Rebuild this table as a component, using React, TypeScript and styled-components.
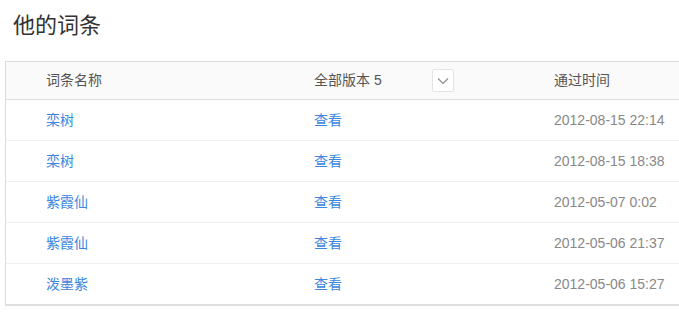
import { createGlobalStyle, styled } from 'styled-components';

const GlobalStyle = createGlobalStyle`
  body {
    margin: 0;
    background: #fff;
    overflow: hidden;
    font-family: "Liberation Sans", "Noto Sans CJK SC", sans-serif;
  }
`;

const Page = styled.div`
  width: 679px;
  overflow: hidden;
`;

const Title = styled.h1`
  margin: 0 0 20px 0;
  padding: 11px 0 0 13px;
  font-size: 22px;
  line-height: 30px;
  font-weight: normal;
  color: #333;
`;

const Table = styled.div`
  margin-left: 5px;
  width: 700px;
  border-top: 1px solid #dcdcdc;
  border-left: 1px solid #dcdcdc;
  border-bottom: 2px solid #dedede;
`;

const Row = styled.div<{ $head?: boolean }>`
  display: grid;
  grid-template-columns: 268px 240px 1fr;
  align-items: center;
  box-sizing: border-box;
  height: ${(p) => (p.$head ? '38px' : '41px')};
  padding-left: 40px;
  padding-bottom: ${(p) => (p.$head ? '2px' : '0')};
  background: ${(p) => (p.$head ? '#fafafa' : '#fff')};
  border-bottom: 1px solid ${(p) => (p.$head ? '#dcdcdc' : '#f0f0f0')};
  font-size: 14px;
  line-height: 16px;
  color: #555;

  &:last-child {
    border-bottom: none;
    height: 40px;
  }
`;

const Cell = styled.div`
  display: flex;
  align-items: center;
`;

const Link = styled.a`
  color: #3a86e0;
  text-decoration: none;
  cursor: pointer;
`;

const Time = styled.span`
  color: #888;
`;

const VersionLabel = styled.span`
  width: 118px;
  color: #555;
`;

const DropBtn = styled.button`
  width: 22px;
  height: 23px;
  padding: 0;
  display: flex;
  align-items: center;
  justify-content: center;
  background: #fff;
  border: 1px solid #e3e3e3;
  border-radius: 2px;
  margin-top: 2px;
`;

const rows = [
  { name: '栾树', time: '2012-08-15 22:14' },
  { name: '栾树', time: '2012-08-15 18:38' },
  { name: '紫霞仙', time: '2012-05-07 0:02' },
  { name: '紫霞仙', time: '2012-05-06 21:37' },
  { name: '泼墨紫', time: '2012-05-06 15:27' },
];

export default function App() {
  return (
    <Page>
      <GlobalStyle />
      <Title>他的词条</Title>
      <Table>
        <Row $head>
          <Cell>词条名称</Cell>
          <Cell>
            <VersionLabel>全部版本 5</VersionLabel>
            <DropBtn>
              <svg width="12" height="8" viewBox="0 0 12 8">
                <path d="M1 1.5 L6 6.5 L11 1.5" fill="none" stroke="#8a8a8a" strokeWidth="1.1" />
              </svg>
            </DropBtn>
          </Cell>
          <Cell>通过时间</Cell>
        </Row>
        {rows.map((r, i) => (
          <Row key={`${r.time}-${i}`}>
            <Cell><Link>{r.name}</Link></Cell>
            <Cell><Link>查看</Link></Cell>
            <Cell><Time>{r.time}</Time></Cell>
          </Row>
        ))}
      </Table>
    </Page>
  );
}
